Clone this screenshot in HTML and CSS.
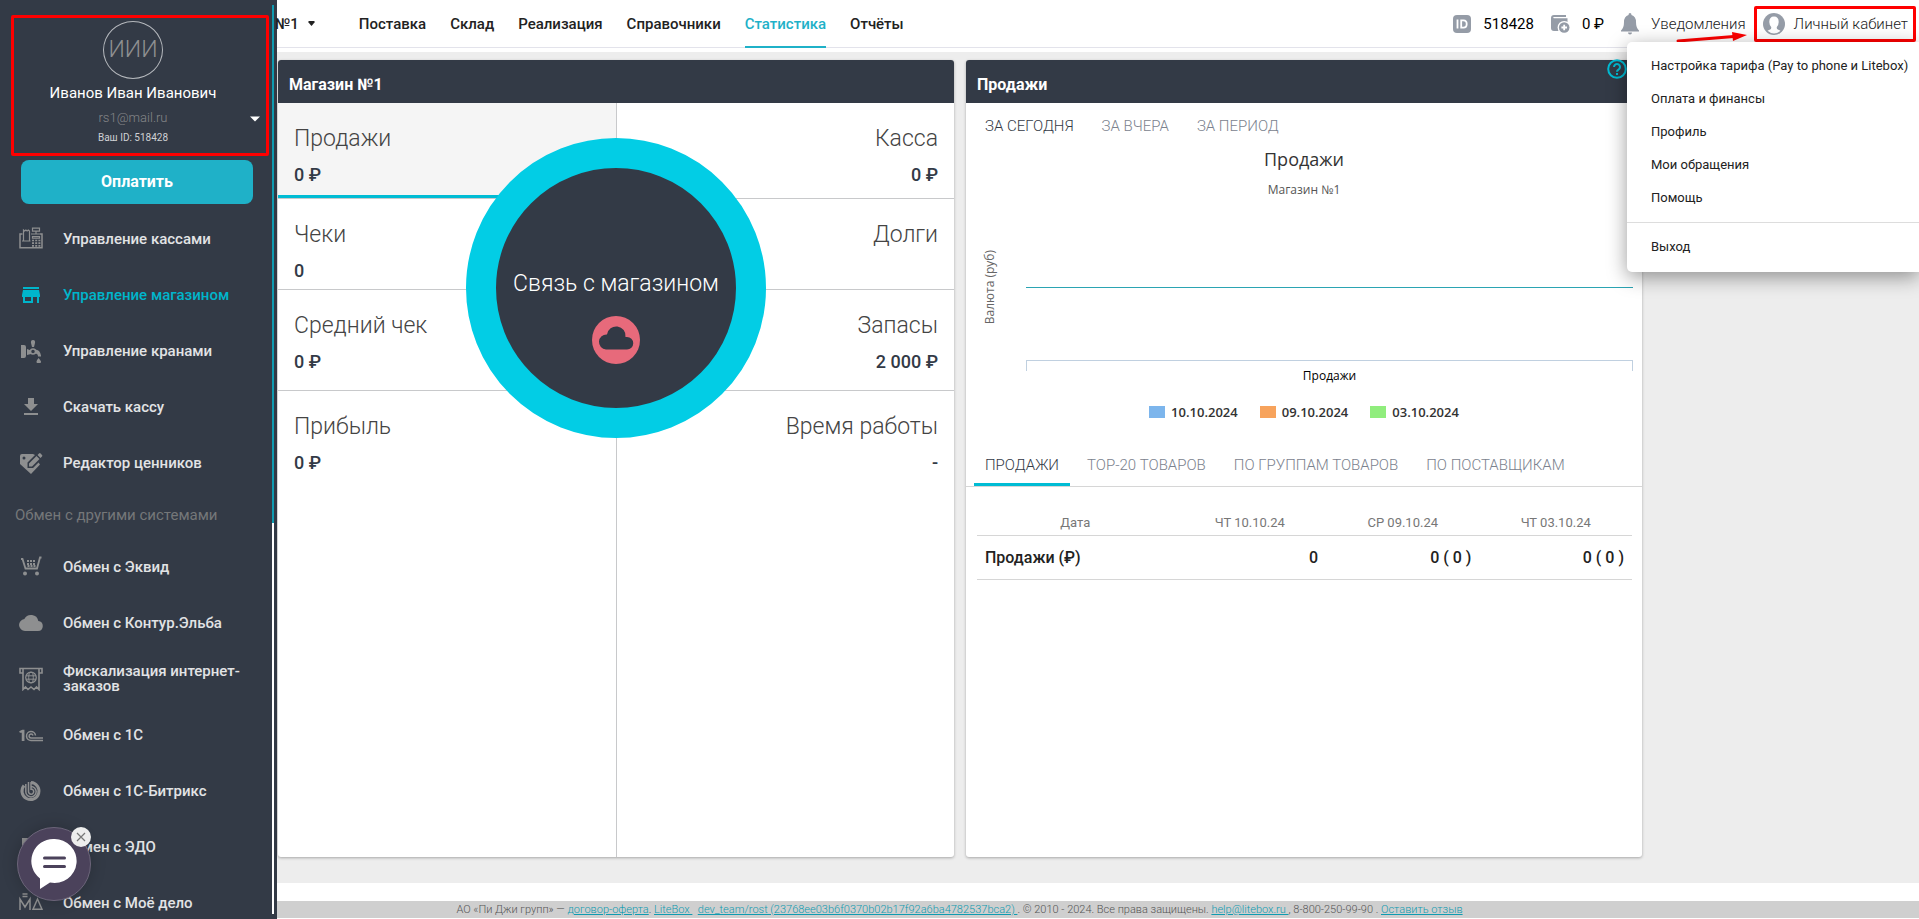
FILE: index.html
```html
<!DOCTYPE html>
<html lang="ru">
<head>
<meta charset="utf-8">
<title>LiteBox — Статистика</title>
<link rel="stylesheet" href="styles.css">
</head>
<body>
<div class="app">
  <aside class="sidebar">
    <section class="profile">
      <div class="avatar">ИИИ</div>
      <div class="profile-name">Иванов Иван Иванович</div>
      <div class="profile-mail">rs1@mail.ru</div>
      <div class="profile-id">Ваш ID: 518428</div>
      <button class="profile-toggle" aria-label="Открыть меню профиля"><svg width="10" height="6" viewBox="0 0 10 6"><path d="M0 0.500h10L5 5.500z" fill="#fff"/></svg></button>
      <span class="mark mark-profile"></span>
    </section>
    <button class="pay">Оплатить</button>
    <nav class="menu">
      <a href="#" class="menu-item"><svg class="icon" viewBox="0 0 24 24" fill="none" stroke="currentColor" stroke-width="1.500"><path d="M3.500 7H1V20.800H23V7H21"/><path stroke-width="1.200" d="M4.500 14V3l1.200 1 1.200-1 1.200 1 1.200-1 1.200 1V14M3 14h8.500M13.500 1.200h7v3h-7zM17 4v3M12 7h9M13.500 9.500h7v1.600h-7z"/><path stroke-width="1.700" stroke-dasharray="2 1.200" d="M13 13.500h9M13 16.200h9M13 18.800h9"/></svg><span>Управление кассами</span></a>
      <a href="#" class="menu-item active"><svg class="icon" viewBox="0 0 24 24" fill="currentColor"><path fill-rule="evenodd" d="M4 4h16v2H4zM4 7h16l1 5v2h-1v6h-2v-6h-4v6H4v-6H3v-2zM6 14v4h6v-4z"/></svg><span>Управление магазином</span></a>
      <a href="#" class="menu-item"><svg class="icon" viewBox="0 0 24 24" fill="currentColor"><path d="M2 6h3q2 0 2 2v9q0 2-2 2H2zM8 10l4 1.500V15l-4 1z"/><path d="M14 1q2.500 0 2 3l-1 4h-2l-1-4q-.5-3 2-3z"/><circle cx="14" cy="12.500" r="2.500" fill="none" stroke="currentColor" stroke-width="1.500"/><path d="M16 10.500q5 0 6 6v1h-3q0-3-3-3zM19.500 19q2.500 3 2.500 3.500a2.200 2.200 0 0 1-4.500 0q0-1 2-3.500z"/></svg><span>Управление кранами</span></a>
      <a href="#" class="menu-item"><svg class="icon" viewBox="0 0 24 24" fill="currentColor"><path d="M19 9h-4V3H9v6H5l7 7zM5 18v2h14v-2z"/></svg><span>Скачать кассу</span></a>
      <a href="#" class="menu-item"><svg class="icon" viewBox="0 0 24 24" fill="currentColor"><path fill-rule="evenodd" d="M3 3h11l2 1-7.500 7.500V17H14l5.500-5.500 1.500 2L12 23 1 13V5q0-2 2-2zM5 5.500a1.500 1.500 0 1 0 0 3 1.500 1.500 0 0 0 0-3z"/><path d="M10 12.500l7.500-7.500 3 3-7.500 7.500h-3zM18.500 4L20 2.500q.8-.8 1.600 0l1.400 1.400q.8.8 0 1.600L21.500 7z"/></svg><span>Редактор ценников</span></a>
      <h2 class="menu-title">Обмен с другими системами</h2>
      <a href="#" class="menu-item"><svg class="icon" viewBox="0 0 24 24" fill="none" stroke="currentColor" stroke-width="1.800"><path d="M2 4h1.500l3 9.500H18L21 2.500h1.500"/><path stroke-width="2" stroke-dasharray="2 1" d="M8 6h9M8 9h9M8.500 11h8"/><circle cx="6" cy="18.500" r="2" fill="currentColor" stroke="none"/><circle cx="18" cy="18.500" r="2" fill="currentColor" stroke="none"/></svg><span>Обмен с Эквид</span></a>
      <a href="#" class="menu-item"><svg class="icon" viewBox="0 0 24 24" fill="currentColor"><path d="M19.350 10.040A7.490 7.490 0 0 0 5.350 8.040 6 6 0 0 0 6 20h13a5 5 0 0 0 .35-9.960z"/></svg><span>Обмен с Контур.Эльба</span></a>
      <a href="#" class="menu-item"><svg class="icon" viewBox="0 0 24 24" fill="none" stroke="currentColor" stroke-width="1.600"><path d="M4 6H1V1.500h22V6h-3M4 2v20.500L6.500 20 9 22.500 12 20l3 2.500 2.500-2.500 2.500 2.500V2"/><circle cx="12" cy="10.500" r="5.300" stroke-width="1.200"/><ellipse cx="12" cy="10.500" rx="2.300" ry="5.300" stroke-width="1"/><path stroke-width="1" d="M7 8.800h10M7 12.200h10"/></svg><span>Фискализация интернет-заказов</span></a>
      <a href="#" class="menu-item"><svg class="icon" viewBox="0 0 24 24" fill="none" stroke="currentColor" stroke-width="1.500"><path d="M1 9h2.500v9M24 17.500H12a4.500 4.500 0 1 1 4.500-5M24 15H12a2 2 0 1 1 2-2.500M.5 9l3-1.500h1.200V18"/></svg><span>Обмен с 1С</span></a>
      <a href="#" class="menu-item"><svg class="icon" viewBox="0 0 24 24" fill="none" stroke="currentColor"><path stroke-width="3" d="M5 6.500A8.500 8.500 0 1 0 12 3.500"/><path stroke-width="1.500" d="M6.800 5v8a5.200 5.200 0 1 0 5.200-5.500M9.500 3v9.500a2.600 2.600 0 1 0 2.500-2.500M12 3v8"/></svg><span>Обмен с 1С-Битрикс</span></a>
      <a href="#" class="menu-item"><svg class="icon" viewBox="0 0 24 24" fill="currentColor"><path d="M3 3h12l6 6v12H3z"/></svg><span>Обмен с ЭДО</span></a>
      <a href="#" class="menu-item"><svg class="icon" viewBox="0 0 24 24" fill="none" stroke="currentColor" stroke-width="1.500"><path d="M1 19V8l5 8 5-8v11M14 18.300L18.500 8 23 18.300zM3.500 3h5M3.500 5.500h5"/></svg><span>Обмен с Моё дело</span></a>
    </nav>
    <span class="scrollbar"><span class="scrollbar-thumb"></span></span>
    <div class="chat">
      <button class="chat-open" aria-label="Открыть чат"><svg width="46" height="52" viewBox="0 0 46 52"><path fill="#fff" d="M23 1a22 22 0 1 1-4 43.500L9 51V40.500A22 22 0 0 1 23 1z"/><path stroke="#4b425b" stroke-width="3" stroke-linecap="round" d="M13.500 20h20M13.500 28.500h20"/></svg></button>
      <button class="chat-close" aria-label="Закрыть"><svg width="10" height="10" viewBox="0 0 10 10"><path d="M1 1l8 8M9 1L1 9" stroke="#777" stroke-width="1.200"/></svg></button>
    </div>
  </aside>

  <div class="main">
    <header class="topbar">
      <button class="store"><span>№1</span><svg width="7" height="5" viewBox="0 0 7 5"><path d="M0.500 0h6v1.500L3.500 5 .5 1.500z" fill="#222"/></svg></button>
      <nav class="topnav">
        <a href="#">Поставка</a><a href="#">Склад</a><a href="#">Реализация</a><a href="#">Справочники</a><a href="#" class="active">Статистика</a><a href="#">Отчёты</a>
      </nav>
      <div class="tools">
        <span class="tool tool-id"><svg width="18" height="18" viewBox="0 0 18 18"><rect width="18" height="18" rx="4" fill="#959ca7"/><path d="M4.500 4.500v9M8.200 5.400h2.300q3.200 0 3.200 3.600t-3.200 3.600H8.200z" fill="none" stroke="#fff" stroke-width="1.800"/></svg>518428</span>
        <span class="tool tool-balance"><svg width="19" height="18" viewBox="0 0 19 18"><path d="M3 0h12v2H3q-.8 0-.8.6t.8.600h13.500V9H9l-1.500 7H3q-3 0-3-3V3q0-3 3-3z" fill="#959ca7"/><circle cx="13.200" cy="12.500" r="6.600" fill="#fff"/><circle cx="13.200" cy="12.500" r="5.300" fill="#959ca7"/><path d="M13.200 9.700v5.600M10.400 12.500H16" stroke="#fff" stroke-width="1.800"/></svg>0 ₽</span>
        <a href="#" class="tool tool-bell"><svg width="18" height="22" viewBox="0 0 18 22"><path fill="#959ca7" d="M9 0q1.500 0 1.500 2Q15 3.500 15 9q0 6 3 8.500V18.500H0V17.500Q3 15 3 9q0-5.500 4.500-7Q7.500 0 9 0zM7 19.500h4q0 2-2 2t-2-2z"/></svg>Уведомления</a>
        <button class="tool tool-account"><svg width="22" height="22" viewBox="0 0 22 22"><circle cx="11" cy="11" r="11" fill="#959ca7"/><path fill="#fff" d="M11 3.500q4.700 0 4.700 5.500 0 2.800-2 5.200l.3 1.800 3.500 1.800q-3 2.700-6.500 2.700t-6.500-2.700L8 16l.3-1.800q-2-2.400-2-5.200 0-5.500 4.700-5.500z"/></svg>Личный кабинет<span class="mark mark-account"></span></button>
        <svg class="arrow" width="72" height="12" viewBox="0 0 72 12"><path d="M2 9L58 4.500" stroke="#f00" stroke-width="3" stroke-linecap="round"/><path d="M56 0l15 3-14 6z" fill="#f00"/></svg>
      </div>
      <div class="dropdown">
        <a href="#">Настройка тарифа (Pay to phone и Litebox)</a>
        <a href="#">Оплата и финансы</a>
        <a href="#">Профиль</a>
        <a href="#">Мои обращения</a>
        <a href="#">Помощь</a>
        <hr>
        <a href="#">Выход</a>
      </div>
    </header>

    <main class="content">
      <section class="card">
        <h2 class="card-head">Магазин №1</h2>
        <div class="metrics">
          <div class="metric selected"><span>Продажи</span><b>0 ₽</b></div>
          <div class="metric right"><span>Касса</span><b>0 ₽</b></div>
          <div class="metric"><span>Чеки</span><b>0</b></div>
          <div class="metric right"><span>Долги</span></div>
          <div class="metric"><span>Средний чек</span><b>0 ₽</b></div>
          <div class="metric right"><span>Запасы</span><b>2 000 ₽</b></div>
          <div class="metric last"><span>Прибыль</span><b>0 ₽</b></div>
          <div class="metric right last"><span>Время работы</span><b>-</b></div>
          <div class="link-state">
            <span>Связь с магазином</span>
            <svg width="48" height="48" viewBox="0 0 48 48"><circle cx="24" cy="24" r="24" fill="#e76a7b"/><path fill="#323945" d="M15 18.500A9.200 9.200 0 0 1 33.500 21H35a6 6 0 0 1 0 12.500H14a7.300 7.300 0 0 1 1-15z"/></svg>
          </div>
        </div>
      </section>

      <section class="card">
        <h2 class="card-head">Продажи</h2>
        <button class="help" aria-label="Справка"><svg width="20" height="20" viewBox="0 0 20 20" fill="none" stroke="#00bcd4" stroke-width="2"><circle cx="10" cy="10" r="8.800"/><path d="M7 8a3 3 0 1 1 4.500 2.600Q10 11.500 10 12.800M10 14v2"/></svg></button>
        <div class="periods">
          <button class="tab active">ЗА СЕГОДНЯ</button><button class="tab">ЗА ВЧЕРА</button><button class="tab">ЗА ПЕРИОД</button>
        </div>
        <figure class="chart">
          <figcaption><span class="chart-title">Продажи</span><span class="chart-sub">Магазин №1</span></figcaption>
          <div class="plot">
            <span class="y-title">Валюта (руб)</span>
            <div class="plot-area"><span class="zero"></span></div>
            <div class="x-axis">Продажи</div>
          </div>
          <ul class="legend">
            <li><i class="blue"></i>10.10.2024</li><li><i class="orange"></i>09.10.2024</li><li><i class="green"></i>03.10.2024</li>
          </ul>
        </figure>
        <div class="reports">
          <button class="tab active">ПРОДАЖИ</button><button class="tab">TOP-20 ТОВАРОВ</button><button class="tab">ПО ГРУППАМ ТОВАРОВ</button><button class="tab">ПО ПОСТАВЩИКАМ</button>
        </div>
        <table class="report">
          <thead><tr><th>Дата</th><th>ЧТ 10.10.24</th><th>СР 09.10.24</th><th>ЧТ 03.10.24</th></tr></thead>
          <tbody><tr><th>Продажи (₽)</th><td>0</td><td>0 ( 0 )</td><td>0 ( 0 )</td></tr></tbody>
        </table>
      </section>
    </main>

    <footer class="footer">АО «Пи Джи групп» — <a href="#">договор-оферта</a>. <a href="#">LiteBox&nbsp;</a>&nbsp; <a href="#">dev_team/rost (23768ee03b6f0370b02b17f92a6ba4782537bca2)&nbsp;</a>. © 2010 - 2024. Все права защищены. <a href="#">help@litebox.ru&nbsp;</a>, 8-800-250-99-90 . <a href="#">Оставить отзыв</a></footer>
  </div>
</div>
</body>
</html>
```
FILE: styles.css
```css
* { box-sizing: border-box; }

body {
  margin: 0;
  font-family: Roboto, "Liberation Sans", sans-serif;
  font-size: 15px;
  color: #222;
  background: #fff;
}

button {
  font: inherit;
  color: inherit;
  border: 0;
  padding: 0;
  background: none;
}

a { color: inherit; text-decoration: none; }
h2 { margin: 0; }
svg { display: block; flex: none; }

.app {
  display: flex;
  height: 100vh;
  overflow: hidden;
}

/* Sidebar */
.sidebar {
  position: relative;
  flex: none;
  width: 277px;
  overflow: hidden;
  background: #333a46;
}

.profile {
  position: relative;
  display: flex;
  flex-direction: column;
  align-items: center;
  height: 160px;
  padding: 21px 11px 0 0;
}

.avatar {
  width: 60px;
  height: 58px;
  border: 1px solid #b5b8bd;
  border-radius: 50%;
  color: #8f9091;
  font-size: 23px;
  font-weight: 300;
  line-height: 56px;
  text-align: center;
}

.profile-name { margin-top: 4px; color: #fff; line-height: 20px; }
.profile-mail { margin-top: 5px; color: #858688; font-size: 13px; font-weight: 300; line-height: 20px; }
.profile-id { margin-top: 2px; color: #cfd1d4; font-size: 10px; line-height: 16px; }
.profile-toggle { position: absolute; left: 250px; top: 116px; }

.mark { position: absolute; border: 3px solid #f00; border-radius: 2px; }
.mark-profile { left: 11px; top: 15px; width: 258px; height: 141px; }

.pay {
  display: block;
  width: 232px;
  height: 44px;
  margin-left: 21px;
  padding-bottom: 2px;
  border-radius: 8px;
  background: #1fb1c8;
  color: #fff;
  font-size: 16px;
  font-weight: 700;
}

.menu { padding-top: 7px; }

.menu-item {
  display: flex;
  align-items: center;
  gap: 20px;
  height: 56px;
  padding: 0 30px 0 19px;
  color: #e2e3e5;
  font-weight: 500;
  line-height: 15px;
}

.menu-item.active { color: #00b5cb; }
.icon { width: 24px; height: 24px; color: #8e8f90; }
.active .icon { color: #00b5cb; }

.menu-title {
  height: 48px;
  padding-left: 15px;
  color: #757779;
  font-size: 15px;
  font-weight: 400;
  line-height: 48px;
}

.scrollbar {
  position: absolute;
  left: 272px;
  top: 5px;
  bottom: 5px;
  width: 2px;
  background: #fff;
}

.scrollbar-thumb { display: block; height: 57%; background: #0f9bb0; }

.chat { position: absolute; left: 17px; bottom: 18px; }

.chat-open {
  display: flex;
  align-items: center;
  justify-content: center;
  width: 74px;
  height: 74px;
  border: 1px solid #6c657a;
  border-radius: 50%;
  background: #4b425b;
  box-shadow: 0 0 16px rgba(0, 0, 0, .2);
}

.chat-close {
  position: absolute;
  right: 0;
  top: 0;
  display: flex;
  align-items: center;
  justify-content: center;
  width: 20px;
  height: 20px;
  border-radius: 50%;
  background: #ededed;
}

/* Main column */
.main {
  display: flex;
  flex: 1;
  flex-direction: column;
  min-width: 0;
}

.topbar {
  position: relative;
  z-index: 2;
  display: flex;
  height: 48px;
  margin-bottom: 4px;
  border-bottom: 1px solid #e3e3eb;
}

.store {
  display: flex;
  align-items: center;
  gap: 9px;
  margin-left: -2px;
  font-weight: 500;
}

.topnav { display: flex; gap: 24px; margin-left: 44px; }

.topnav a {
  height: 48px;
  font-weight: 500;
  line-height: 48px;
}

.topnav .active { border-bottom: 2px solid #1fb1c8; color: #1fb1c8; }

.tools {
  position: relative;
  display: flex;
  align-items: center;
  margin-left: auto;
  padding-right: 11px;
}

.tool { position: relative; display: flex; align-items: center; gap: 12px; }
.tool-id, .tool-balance { color: #000; }
.tool-id, .tool-balance, .tool-bell { margin-right: 17px; }
.tool-bell, .tool-account { font-weight: 300; }
.tool-account { gap: 9px; }
.mark-account { left: -9px; right: -8px; top: -7px; bottom: -7px; }
.arrow { position: absolute; right: 171px; top: 32px; }

.dropdown {
  position: absolute;
  right: 0;
  top: 42px;
  width: 292px;
  padding: 7px 0 9px;
  border-radius: 5px 0 0 5px;
  background: #fff;
  box-shadow: 0 5px 20px rgba(0, 0, 0, .4);
}

.dropdown a {
  display: block;
  padding-left: 24px;
  font-size: 13px;
  line-height: 33px;
  white-space: nowrap;
}

.dropdown hr { margin: 8px 0 7px; border: 0; border-top: 1px solid #ddd; }

.content {
  display: grid;
  flex: 1;
  grid-template-columns: 1fr 1fr;
  gap: 12px;
  min-height: 0;
  padding: 8px 277px 26px 1px;
  background: #ededed;
}

.card {
  position: relative;
  display: flex;
  flex-direction: column;
  border-radius: 3px;
  background: #fff;
  box-shadow: 0 1px 3px rgba(0, 0, 0, .3);
}

.card-head {
  height: 43px;
  padding-left: 11px;
  border-radius: 3px 3px 0 0;
  background: #333a46;
  color: #fff;
  font-size: 16px;
  font-weight: 700;
  line-height: 49px;
}

.metrics {
  position: relative;
  display: grid;
  flex: 1;
  grid-template-columns: 1fr 1fr;
  grid-template-rows: 96px 91px 101px 1fr;
}

.metric {
  display: flex;
  flex-direction: column;
  gap: 8px;
  padding: 22px 16px 0;
  border-bottom: 1px solid #c8c9cb;
  color: #333a46;
}

.metric span { color: #444; font-size: 23px; font-weight: 300; line-height: 28px; }
.metric b { font-size: 18px; font-weight: 500; line-height: 28px; }
.metric.right { border-left: 1px solid #c8c9cb; text-align: right; }
.metric.last { border-bottom: 0; }

.metric.selected {
  background: #f5f5f5;
  box-shadow: inset 0 -3px #00bcd4;
}

.link-state {
  position: absolute;
  left: calc(50% - 150px);
  top: 35px;
  display: flex;
  flex-direction: column;
  align-items: center;
  gap: 17px;
  width: 300px;
  height: 300px;
  padding-top: 101px;
  border: 30px solid #02cde5;
  border-radius: 50%;
  background: #333a46;
  color: #fff;
  font-size: 23px;
  font-weight: 300;
  line-height: 30px;
}

/* Sales card */
.help { position: absolute; right: 15px; top: -1px; }

.periods, .reports { display: flex; gap: 6px; padding: 0 8px; }
.periods { padding-top: 1px; }
.reports { border-bottom: 1px solid #d6d6d6; }

.tab {
  height: 43px;
  padding: 0 11px;
  color: #7b828e;
  font-weight: 300;
  line-height: 45px;
  white-space: nowrap;
}

.tab.active { color: #333a46; }
.reports .active { box-shadow: inset 0 -3px #00bcd4; }

.chart {
  margin: 0;
  font-family: "Open Sans", "Noto Sans", sans-serif;
}

.chart figcaption { display: flex; flex-direction: column; align-items: center; }
.chart-title { color: #333; font-size: 18px; line-height: 24px; }
.chart-sub { margin-top: 11px; color: #555; font-size: 12px; line-height: 16px; }

.plot {
  display: grid;
  grid-template-columns: 24px 1fr;
  grid-template-rows: 147px 28px;
  column-gap: 24px;
  margin-top: 16px;
  padding: 0 9px 0 12px;
}

.y-title {
  align-self: center;
  justify-self: center;
  color: #666;
  font-size: 12px;
  line-height: 16px;
  writing-mode: vertical-rl;
  transform: rotate(180deg);
}

.plot-area { display: flex; align-items: center; border-bottom: 1px solid #c0d0e0; }
.zero { flex: 1; height: 1px; background: #2ba4b3; }

.x-axis {
  grid-column: 2;
  height: 28px;
  border: solid #c0d0e0;
  border-width: 0 1px;
  border-image: linear-gradient(#c0d0e0 10px, transparent 10px) 1;
  color: #000;
  font-size: 12px;
  line-height: 30px;
  text-align: center;
}

.legend {
  display: flex;
  justify-content: center;
  gap: 22px;
  margin: 13px 0 0;
  padding: 0;
  color: #333;
  font-size: 13px;
  font-weight: 600;
  line-height: 20px;
  list-style: none;
}

.legend li { display: flex; align-items: center; gap: 6px; }
.legend i { width: 16px; height: 12px; }
.blue { background: #7cb5ec; }
.orange { background: #f7a35c; }
.green { background: #90ed7d; }

.reports { margin-top: 21px; }

.report {
  margin: 24px 10px 0 11px;
  border-collapse: collapse;
  table-layout: fixed;
}

.report th, .report td { padding: 0 8px; border-bottom: 1px solid #d6d6d6; }
.report th:first-child { width: 30%; }

.report thead th {
  height: 24px;
  color: #777;
  font-size: 13px;
  font-weight: 400;
}

.report tbody th, .report tbody td { height: 44px; font-size: 16px; font-weight: 500; text-align: right; }
.report tbody th { text-align: left; }

.footer {
  margin: 18px 0 1px;
  padding-right: 277px;
  background: #cfcfcf;
  color: #555;
  font-size: 11px;
  font-weight: 300;
  line-height: 17px;
  text-align: center;
  white-space: nowrap;
}

.footer a { color: #0f9bb0; text-decoration: underline; }
```
